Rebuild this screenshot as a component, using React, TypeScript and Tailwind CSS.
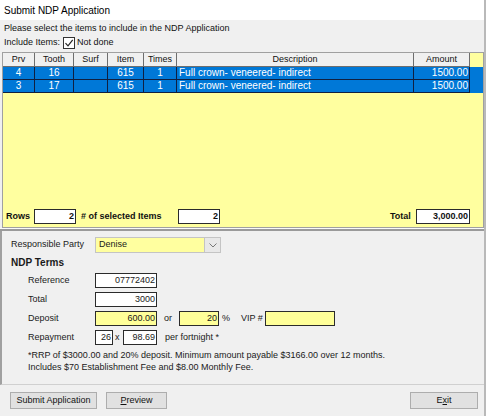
import React from "react";

const cols = [
  { w: "w-[32px]", label: "Prv", align: "justify-center" },
  { w: "w-[39px]", label: "Tooth", align: "justify-center" },
  { w: "w-[34px]", label: "Surf", align: "justify-center" },
  { w: "w-[36px]", label: "Item", align: "justify-center" },
  { w: "w-[33px]", label: "Times", align: "justify-center" },
  { w: "w-[237px]", label: "Description", align: "justify-start pl-[2px]" },
  { w: "w-[56px]", label: "Amount", align: "justify-end pr-[1px]" },
];

const rows = [
  ["4", "16", "", "615", "1", "Full crown- veneered- indirect", "1500.00"],
  ["3", "17", "", "615", "1", "Full crown- veneered- indirect", "1500.00"],
];

function Field({
  w,
  value,
  yellow,
  h = "h-[15px]",
}: {
  w: string;
  value?: string;
  yellow?: boolean;
  h?: string;
}) {
  return (
    <div
      className={`${w} ${h} ${
        yellow ? "bg-[#ffff99]" : "bg-white"
      } border border-[#2b2b2b] flex items-center justify-end pr-[1px] leading-none`}
    >
      {value}
    </div>
  );
}

export default function App() {
  return (
    <div className="w-[486px] h-[416px] bg-[#f0f0f0] border-r-2 border-[#b9b9b9] font-['Liberation_Sans',_Arial,_sans-serif] text-[9px] text-[#111] flex flex-col overflow-hidden">
      {/* title bar */}
      <div className="h-[20px] bg-white flex items-center pl-[4px] text-[10px] text-black">
        Submit NDP Application
      </div>

      {/* intro */}
      <div className="pl-[4px] pt-[3px]">
        <div className="h-[12px] flex items-center">
          Please select the items to include in the NDP Application
        </div>
        <div className="h-[15px] flex items-center">
          <span>Include Items:</span>
          <span className="ml-[3px] w-[12px] h-[12px] border border-[#333] bg-white flex items-center justify-center">
            <svg width="10" height="10" viewBox="0 0 10 10">
              <path d="M1.5 5.2 L4 7.8 L8.7 1.8" fill="none" stroke="#222" strokeWidth="1.2" />
            </svg>
          </span>
          <span className="ml-[2px]">Not done</span>
        </div>
      </div>

      {/* grid */}
      <div className="ml-[2px] mt-[2px] w-[482px] h-[176px] border border-[#a0a0a0] bg-[#ffff9f] flex flex-col">
        {/* header */}
        <div className="flex h-[14px] shrink-0">
          {cols.map((c) => (
            <div
              key={c.label}
              className={`${c.w} h-full bg-[#f0f0f0] border-r border-b border-[#6e6e6e] flex items-center justify-center`}
            >
              {c.label}
            </div>
          ))}
        </div>
        {rows.map((r, i) => (
          <div key={i} className="flex h-[13px] shrink-0 bg-[#0078d7] text-white text-[10px]">
            {r.map((v, j) => (
              <div
                key={j}
                className={`${cols[j].w} h-full border-r border-b border-[#102040] flex items-center ${cols[j].align} leading-none`}
              >
                {v}
              </div>
            ))}
            <div className="flex-1" />
          </div>
        ))}
        <div className="flex-1" />
        {/* footer */}
        <div className="flex items-center h-[15px] mb-[3px] font-bold">
          <span className="ml-[3px] w-[28px]">Rows</span>
          <Field w="w-[42px]" value="2" />
          <span className="ml-[5px] w-[97px]"># of selected Items</span>
          <Field w="w-[42px]" value="2" />
          <div className="flex-1" />
          <span className="w-[26px]">Total</span>
          <Field w="w-[54px]" value="3,000.00" />
          <div className="w-[13px]" />
        </div>
      </div>

      {/* separator */}
      <div className="h-[1px] bg-[#fafafa]" />
      <div className="h-[2px] bg-[#9a9a9a]" />

      {/* lower panel */}
      <div className="h-[154px] border-l-2 border-[#a0a0a0] border-b border-b-[#d0d0d0] flex flex-col pt-[6px] text-[#1a1a1a]">
        <div className="flex items-center h-[16px]">
          <span className="ml-[9px] w-[84px]">Responsible Party</span>
          <div className="w-[126px] h-[16px] bg-[#ffff9f] border border-[#c4c4c4] flex items-center">
            <span className="flex-1 pl-[3px]">Denise</span>
            <div className="w-[16px] h-full bg-[#e8e8e8] border-l border-[#c4c4c4] flex items-center justify-center">
              <svg width="8" height="5" viewBox="0 0 8 5">
                <path d="M0.5 0.5 L4 4 L7.5 0.5" fill="none" stroke="#777" strokeWidth="1" />
              </svg>
            </div>
          </div>
        </div>
        <div className="h-[16px] mt-[1px] flex items-center ml-[9px] font-bold text-[10px]">NDP Terms</div>
        <div className="flex flex-col gap-[4px] mt-[3px]">
          <div className="flex items-center">
            <span className="ml-[26px] w-[67px]">Reference</span>
            <Field w="w-[62px]" value="07772402" />
          </div>
          <div className="flex items-center">
            <span className="ml-[26px] w-[67px]">Total</span>
            <Field w="w-[62px]" value="3000" />
          </div>
          <div className="flex items-center">
            <span className="ml-[26px] w-[67px]">Deposit</span>
            <Field w="w-[62px]" value="600.00" yellow />
            <span className="ml-[7px] w-[15px]">or</span>
            <Field w="w-[40px]" value="20" yellow />
            <span className="ml-[3px] w-[19px]">%</span>
            <span className="w-[24px]">VIP #</span>
            <Field w="w-[70px]" yellow />
          </div>
          <div className="flex items-center">
            <span className="ml-[26px] w-[67px]">Repayment</span>
            <Field w="w-[18px]" value="26" />
            <span className="ml-[2px] w-[8px]">x</span>
            <Field w="w-[34px]" value="98.69" />
            <span className="ml-[8px]">per fortnight *</span>
          </div>
        </div>
        <div className="ml-[26px] mt-[4px] leading-[12px]">
          <div>*RRP of $3000.00 and 20% deposit. Minimum amount payable $3166.00 over 12 months.</div>
          <div>Includes $70 Establishment Fee and $8.00 Monthly Fee.</div>
        </div>
      </div>

      {/* buttons */}
      <div className="flex items-center pt-[7px] text-[#111]">
        <div className="ml-[10px] w-[87px] h-[17px] bg-[#e1e1e1] border border-[#adadad] flex items-center justify-center">
          Submit Application
        </div>
        <div className="ml-[9px] w-[61px] h-[17px] bg-[#e1e1e1] border border-[#adadad] flex items-center justify-center">
          <span className="underline">P</span>review
        </div>
        <div className="flex-1" />
        <div className="mr-[6px] w-[68px] h-[17px] bg-[#e1e1e1] border border-[#adadad] flex items-center justify-center">
          E<span className="underline">x</span>it
        </div>
      </div>
    </div>
  );
}
